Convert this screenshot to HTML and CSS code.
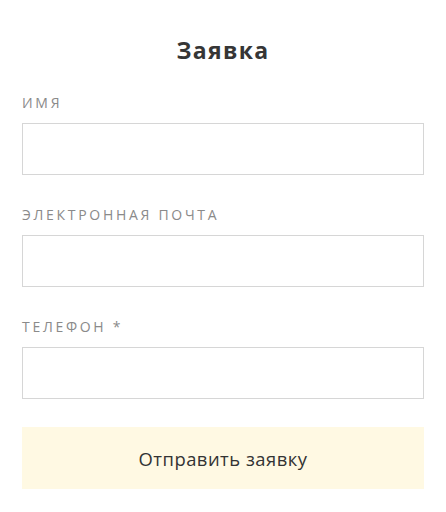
FILE: index.html
```html
<!DOCTYPE html>
<html lang="ru">
<head>
<meta charset="utf-8">
<link rel="stylesheet" href="styles.css">
</head>
<body>
<form class="form">
  <h2 class="title">Заявка</h2>
  <label class="field">
    <span class="label">Имя</span>
    <input class="input" type="text">
  </label>
  <label class="field">
    <span class="label">Электронная почта</span>
    <input class="input" type="email">
  </label>
  <label class="field">
    <span class="label">Телефон *</span>
    <input class="input" type="tel">
  </label>
  <button class="submit" type="button">Отправить заявку</button>
</form>
</body>
</html>
```
FILE: styles.css
```css
html, body {
  margin: 0;
  padding: 0;
  background: #fff;
}
body {
  font-family: "Open Sans", "Liberation Sans", sans-serif;
  color: #333;
}
.form {
  display: flex;
  flex-direction: column;
  padding: 34px 22px 0 22px;
  width: 402px;
}
.title {
  margin: 0 0 28px 0;
  text-align: center;
  font-size: 23px;
  font-weight: 700;
  letter-spacing: 1.3px;
  line-height: 32px;
  color: #363636;
}
.field {
  display: flex;
  flex-direction: column;
  gap: 11px;
}
.field + .field {
  margin-top: 31px;
}
.label {
  font-size: 14px;
  line-height: 18px;
  letter-spacing: 2.7px;
  text-transform: uppercase;
  color: #8a8a8a;
}
.input {
  box-sizing: border-box;
  height: 52px;
  margin: 0;
  border: 1px solid #d6d6d6;
  border-radius: 0;
  background: #fff;
  padding: 0 12px;
  font: inherit;
}
.submit {
  margin-top: 28px;
  height: 62px;
  border: 0;
  background: #fff9e3;
  font-family: inherit;
  font-size: 18.4px;
  letter-spacing: 0.5px;
  color: #333;
  cursor: pointer;
}
```
